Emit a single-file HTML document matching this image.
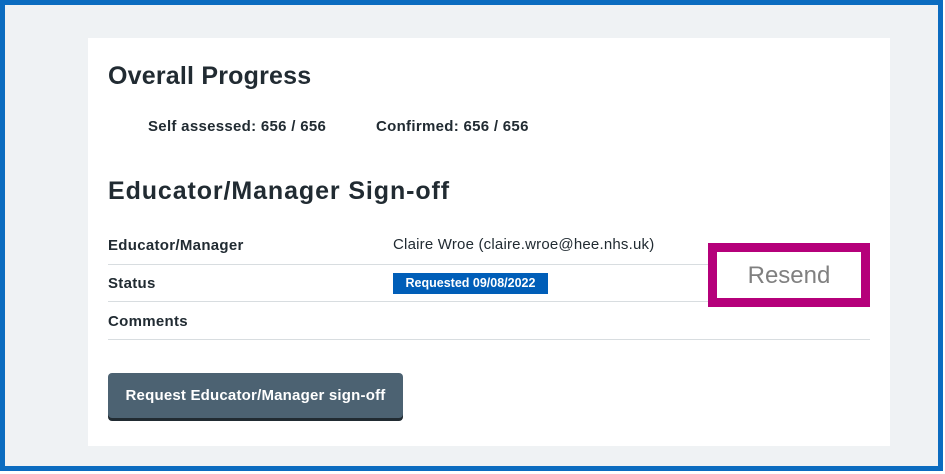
<!DOCTYPE html>
<html><head><style>
body{margin:0;width:945px;height:474px;overflow:hidden;background:#fff;font-family:"Liberation Sans",sans-serif;color:#212b32}
.frame{position:absolute;left:0;top:0;width:933px;height:461px;border:5px solid #0b6cc0;background:#eff2f4}
.card{position:absolute;left:88px;top:38px;width:802px;height:408px;background:#fff}
.a{position:absolute;white-space:nowrap}
.h{font-weight:bold;font-size:25px;letter-spacing:0.2px}
.b{font-weight:bold;font-size:15px;letter-spacing:0.3px}
.line{position:absolute;left:108px;width:762px;height:1px;background:#d8dde0}
.tag{position:absolute;left:393px;top:273px;width:155px;height:21px;background:#005eb8;color:#fff;font-weight:bold;font-size:12.5px;line-height:21px;text-align:center}
.btn{position:absolute;left:108px;top:373px;width:295px;height:45px;background:#4c6272;border-radius:4px;box-shadow:0 3px 0 #212b32;color:#fff;font-weight:bold;font-size:15px;letter-spacing:0.2px;line-height:46px;text-align:center}
.mag{position:absolute;left:708px;top:243px;width:144px;height:46px;border:9px solid #b5007a;background:#fff;color:#808080;font-size:24px;line-height:48px;text-align:center}
</style></head><body>
<div class="frame"></div>
<div class="card"></div>
<div class="a h" style="left:108px;top:62px">Overall Progress</div>
<div class="a b" style="left:148px;top:118px">Self assessed: 656 / 656</div>
<div class="a b" style="left:376px;top:118px">Confirmed: 656 / 656</div>
<div class="a h" style="left:108px;top:177px;letter-spacing:0.9px">Educator/Manager Sign-off</div>
<div class="a b" style="left:108px;top:237px">Educator/Manager</div>
<div class="a" style="left:393px;top:236px;font-size:15px;letter-spacing:0.2px">Claire Wroe (claire.wroe@hee.nhs.uk)</div>
<div class="line" style="top:264px"></div>
<div class="a b" style="left:108px;top:275px">Status</div>
<div class="tag">Requested 09/08/2022</div>
<div class="line" style="top:301px"></div>
<div class="a b" style="left:108px;top:313px">Comments</div>
<div class="line" style="top:339px"></div>
<div class="btn">Request Educator/Manager sign-off</div>
<div class="mag">Resend</div>
</body></html>
